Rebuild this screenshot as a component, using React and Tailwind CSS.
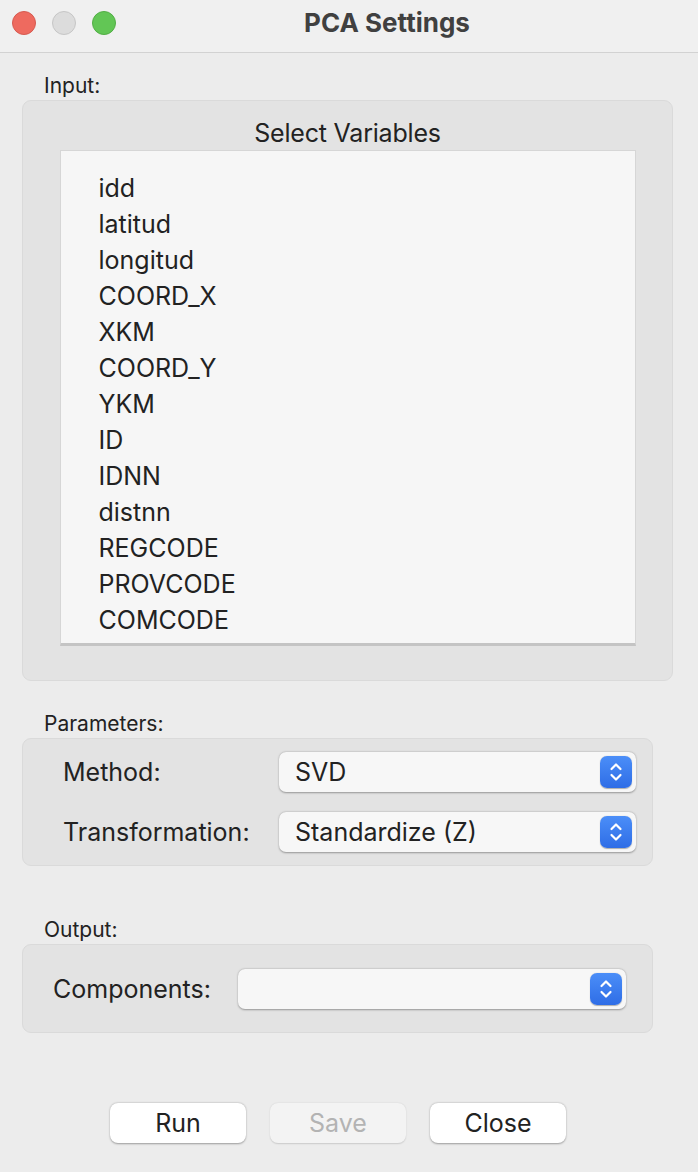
import React from 'react';

const font = { fontFamily: 'Inter, "Noto Sans", sans-serif' };

const variables = [
  'idd', 'latitud', 'longitud', 'COORD_X', 'XKM', 'COORD_Y', 'YKM',
  'ID', 'IDNN', 'distnn', 'REGCODE', 'PROVCODE', 'COMCODE',
];

// little blue up/down stepper at the right end of a popup
const Stepper = () => (
  <div className="w-[32px] h-[32px] rounded-[7px] bg-gradient-to-b from-[#4b8ef8] to-[#2f6de6] flex items-center justify-center shadow-[0_0.5px_1px_rgba(0,0,0,0.3)]">
    <svg width="14" height="22" viewBox="0 0 14 22" fill="none" stroke="white" strokeWidth="2.2" strokeLinecap="round" strokeLinejoin="round">
      <path d="M2.5 8 L7 3.5 L11.5 8" />
      <path d="M2.5 14 L7 18.5 L11.5 14" />
    </svg>
  </div>
);

const Popup = ({ value, className = '' }) => (
  <div className={`h-[40px] rounded-[7px] bg-[#f7f7f7] shadow-[0_0.5px_2px_rgba(0,0,0,0.35)] flex items-center pl-[16px] pr-[4px] ${className}`}>
    <span className="flex-1 text-[25px] leading-[30px] text-[#222]">{value}</span>
    <Stepper />
  </div>
);

const SectionLabel = ({ children, className = '' }) => (
  <div className={`pl-[44px] h-[20px] leading-[20px] text-[21px] text-[#222] ${className}`}>{children}</div>
);

const Button = ({ children, disabled }) => (
  <button
    className={`w-[136px] h-[40px] rounded-[8px] text-[25px] leading-[30px] ${disabled ? 'bg-[#f3f3f3] text-[#b3b3b3] shadow-[0_0.5px_1.5px_rgba(0,0,0,0.15)]' : 'bg-white text-[#222] shadow-[0_0.5px_2px_rgba(0,0,0,0.35)]'}`}
    style={font}
  >
    {children}
  </button>
);

export default function App() {
  return (
    <div className="w-[698px] h-[1172px] bg-[#ececec] flex flex-col" style={font}>
      {/* title bar */}
      <div className="h-[53px] bg-[#f0f0f0] border-b border-[#d2d2d2] relative flex items-center justify-center">
        <div className="absolute left-[12px] top-[11px] flex gap-[16px]">
          <div className="w-[24px] h-[24px] rounded-full bg-[#ee6a5f] border border-[#d65a50]" />
          <div className="w-[24px] h-[24px] rounded-full bg-[#dcdcdc] border border-[#c6c6c6]" />
          <div className="w-[24px] h-[24px] rounded-full bg-[#62c655] border border-[#52ae45]" />
        </div>
        <span className="ml-[76px] text-[26px] leading-[30px] font-bold text-[#404040] mt-[-6px]">PCA Settings</span>
      </div>

      {/* input */}
      <SectionLabel className="mt-[23px]">Input:</SectionLabel>
      <div className="mt-[4px] ml-[22px] w-[651px] h-[581px] rounded-[9px] bg-[#e3e3e3] border border-[#dadada] flex flex-col items-center">
        <div className="mt-[19px] h-[26px] leading-[26px] text-[25px] text-[#222] tracking-[-0.2px]">Select Variables</div>
        <div className="mt-[4px] w-[576px] h-[496px] bg-[#f6f6f6] border border-[#d6d6d6] border-b-[3px] border-b-[#c4c4c4] pt-[20px] pl-[38px]">
          {variables.map((v) => (
            <div key={v} className="h-[36px] leading-[34px] text-[25px] text-[#222]">{v}</div>
          ))}
        </div>
      </div>

      {/* parameters */}
      <SectionLabel className="mt-[33px]">Parameters:</SectionLabel>
      <div className="mt-[4px] ml-[22px] w-[631px] h-[128px] rounded-[9px] bg-[#e3e3e3] border border-[#dadada] pl-[40px] pr-[16px] pt-[13px] flex flex-col gap-[20px]">
        <div className="flex items-center">
          <span className="w-[216px] text-[25px] leading-[30px] text-[#222]">Method:</span>
          <Popup value="SVD" className="flex-1" />
        </div>
        <div className="flex items-center">
          <span className="w-[216px] text-[25px] leading-[30px] text-[#222]">Transformation:</span>
          <Popup value="Standardize (Z)" className="flex-1" />
        </div>
      </div>

      {/* output */}
      <SectionLabel className="mt-[54px]">Output:</SectionLabel>
      <div className="mt-[4px] ml-[22px] w-[631px] h-[89px] rounded-[9px] bg-[#e3e3e3] border border-[#dadada] pl-[30px] pr-[26px] flex items-center">
        <span className="w-[185px] text-[25px] leading-[30px] text-[#222]">Components:</span>
        <Popup value="" className="flex-1" />
      </div>

      {/* buttons */}
      <div className="mt-[70px] ml-[110px] flex gap-[24px]">
        <Button>Run</Button>
        <Button disabled>Save</Button>
        <Button>Close</Button>
      </div>
    </div>
  );
}
